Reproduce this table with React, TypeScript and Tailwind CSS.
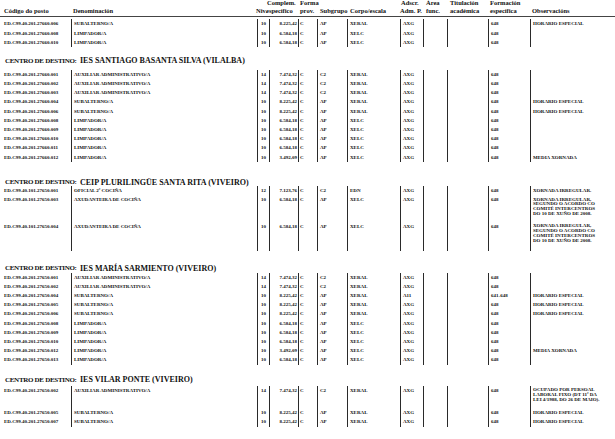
import React from "react";

type Row = {
  code: string;
  name: string;
  niv: string;
  amt: string;
  sub: string;
  corpo: string;
  ads: string;
  fe: string;
  obs?: string[];
  h?: string;
};

const ADM = "AUXILIAR ADMINISTRATIVO/A";
const SUB = "SUBALTERNO/A";
const LIM = "LIMPADOR/A";
const XOR = ["XORNADA IRREGULAR,", "SEGUNDO O ACORDO CO", "COMITÉ INTERCENTROS", "DO 10 DE XUÑO DE 2008."];

const adm = (code: string, extra: Partial<Row> = {}): Row => ({
  code, name: ADM, niv: "14", amt: "7.474,32", sub: "C2", corpo: "XERAL", ads: "AXG", fe: "648", ...extra,
});
const sub = (code: string, extra: Partial<Row> = {}): Row => ({
  code, name: SUB, niv: "10", amt: "8.225,42", sub: "AP", corpo: "XERAL", ads: "AXG", fe: "648", obs: ["HORARIO ESPECIAL"], ...extra,
});
const lim = (code: string, extra: Partial<Row> = {}): Row => ({
  code, name: LIM, niv: "10", amt: "6.584,18", sub: "AP", corpo: "XELC", ads: "AXG", fe: "648", ...extra,
});
const media = { amt: "3.492,09", obs: ["MEDIA XORNADA"] };

const sections: { title?: string; titleMt?: string; rowsMt: string; rows: Row[] }[] = [
  {
    rowsMt: "mt-[2.4px]",
    rows: [sub("ED.C99.40.201.27660.006"), lim("ED.C99.40.201.27660.008"), lim("ED.C99.40.201.27660.010")],
  },
  {
    title: "IES SANTIAGO BASANTA SILVA (VILALBA)",
    titleMt: "mt-[9px]",
    rowsMt: "mt-[3.9px]",
    rows: [
      adm("ED.C99.40.201.27660.001"),
      adm("ED.C99.40.201.27660.002"),
      adm("ED.C99.40.201.27660.003"),
      sub("ED.C99.40.201.27660.004"),
      sub("ED.C99.40.201.27660.006"),
      lim("ED.C99.40.201.27660.008"),
      lim("ED.C99.40.201.27660.009"),
      lim("ED.C99.40.201.27660.010"),
      lim("ED.C99.40.201.27660.011"),
      lim("ED.C99.40.201.27660.012", media),
    ],
  },
  {
    title: "CEIP PLURILINGÜE SANTA RITA (VIVEIRO)",
    titleMt: "mt-[16px]",
    rowsMt: "-mt-[1.5px]",
    rows: [
      {
        code: "ED.C99.40.101.27650.001", name: "OFICIAL 2ª COCIÑA", niv: "12", amt: "7.123,76",
        sub: "C2", corpo: "EDN", ads: "AXG", fe: "648", obs: ["XORNADA IRREGULAR."],
      },
      lim("ED.C99.40.101.27650.003", { name: "AXUDANTEIRA DE COCIÑA", obs: XOR, h: "h-[26.7px]" }),
      lim("ED.C99.40.101.27650.004", { name: "AXUDANTEIRA DE COCIÑA", obs: XOR, h: "h-[28.6px]" }),
    ],
  },
  {
    title: "IES MARÍA SARMIENTO (VIVEIRO)",
    titleMt: "mt-[13px]",
    rowsMt: "-mt-[1px]",
    rows: [
      adm("ED.C99.40.201.27650.001"),
      adm("ED.C99.40.201.27650.002"),
      sub("ED.C99.40.201.27650.004", { ads: "A11", fe: "641-648" }),
      sub("ED.C99.40.201.27650.005"),
      sub("ED.C99.40.201.27650.006"),
      lim("ED.C99.40.201.27650.008"),
      lim("ED.C99.40.201.27650.009"),
      lim("ED.C99.40.201.27650.010"),
      lim("ED.C99.40.201.27650.012", media),
      lim("ED.C99.40.201.27650.013"),
    ],
  },
  {
    title: "IES VILAR PONTE (VIVEIRO)",
    titleMt: "mt-[10.5px]",
    rowsMt: "mt-[1.2px]",
    rows: [
      adm("ED.C99.40.201.27650.002", {
        obs: ["OCUPADO POR PERSOAL", "LABORAL FIXO (DT 11ª DA", "LEI 4/1988, DO 26 DE MAIO)."],
        h: "h-[22px]",
      }),
      sub("ED.C99.40.201.27650.005"),
      sub("ED.C99.40.201.27650.007"),
    ],
  },
];

const cell = "shrink-0 border-l border-[#2a2a2a] leading-[9.2px] whitespace-nowrap";

function TableRow({ r }: { r: Row }) {
  return (
    <div className={`flex ${r.h ?? "h-[9.2px]"}`}>
      <div className="w-[71px] shrink-0 pl-[4px] leading-[9.2px] whitespace-nowrap">{r.code}</div>
      <div className={`${cell} w-[186px] pl-[2px]`}>{r.name}</div>
      <div className={`${cell} w-[12px] text-center`}>{r.niv}</div>
      <div className={`${cell} w-[29px] pr-[1px] text-right`}>{r.amt}</div>
      <div className={`${cell} w-[19px] pl-[1px]`}>C</div>
      <div className={`${cell} w-[30px] pl-[2px]`}>{r.sub}</div>
      <div className={`${cell} w-[53px] pl-[2px]`}>{r.corpo}</div>
      <div className={`${cell} w-[23px] pl-[2px]`}>{r.ads}</div>
      <div className={`${cell} w-[24px]`} />
      <div className={`${cell} w-[41px]`} />
      <div className={`${cell} w-[42px] pl-[2px]`}>{r.fe}</div>
      <div className="flex-1 border-l border-[#2a2a2a] pl-[2px]">
        {r.obs && r.obs.length > 1 ? (
          <div className="pt-[2.2px] leading-[4.8px]">
            {r.obs.map((l) => (
              <div key={l} className="whitespace-nowrap">{l}</div>
            ))}
          </div>
        ) : (
          <div className="leading-[9.2px] whitespace-nowrap">{r.obs?.[0]}</div>
        )}
      </div>
    </div>
  );
}

export default function App() {
  return (
    <div className="w-[615px] h-[439px] overflow-hidden bg-white text-[#111] font-['Liberation_Serif',serif]">
      <div className="flex h-[17px] items-end border-b border-[#444] pb-[1px] text-[6.5px] font-bold leading-[8px] whitespace-nowrap">
        <div className="w-[73px] shrink-0 pl-[4px]">Código do posto</div>
        <div className="w-[183px] shrink-0">Denominación</div>
        <div className="w-[10px] shrink-0">Niv.</div>
        <div className="w-[34px] shrink-0">
          <div className="pl-[1px]">Complem.</div>
          <div>específico</div>
        </div>
        <div className="w-[20px] shrink-0">
          <div>Forma</div>
          <div>prov.</div>
        </div>
        <div className="w-[30px] shrink-0">Subgrupo</div>
        <div className="w-[50px] shrink-0">Corpo/escala</div>
        <div className="w-[26px] shrink-0">
          <div className="pl-[1px]">Adscr.</div>
          <div>Adm. P.</div>
        </div>
        <div className="w-[24px] shrink-0">
          <div>Área</div>
          <div>func.</div>
        </div>
        <div className="w-[40px] shrink-0">
          <div>Titulación</div>
          <div>académica</div>
        </div>
        <div className="w-[42px] shrink-0">
          <div>Formación</div>
          <div>específica</div>
        </div>
        <div className="flex-1">Observacións</div>
      </div>

      {sections.map((s, i) => (
        <div key={i}>
          {s.title && (
            <div className={`${s.titleMt} flex h-[10px] items-center pl-[5px] font-bold whitespace-nowrap`}>
              <span className="w-[75px] shrink-0 text-[7px] tracking-[-0.3px]">CENTRO DE DESTINO:</span>
              <span className="text-[8px]">{s.title}</span>
            </div>
          )}
          <div className={`${s.rowsMt} text-[5px] font-bold`}>
            {s.rows.map((r, j) => (
              <TableRow key={j} r={r} />
            ))}
          </div>
        </div>
      ))}
    </div>
  );
}
